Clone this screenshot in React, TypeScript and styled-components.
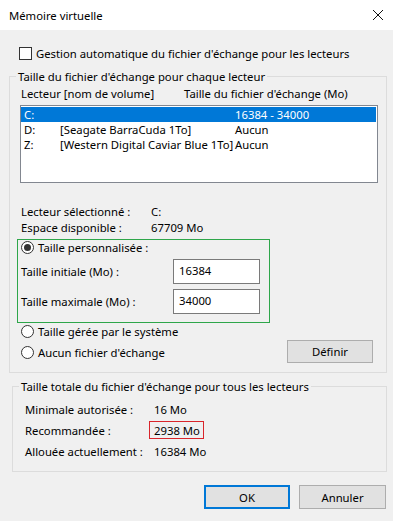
import React from 'react';
import styled, { createGlobalStyle } from 'styled-components';

const drives = [
  { letter: 'C:', name: '', size: '16384 - 34000', selected: true },
  { letter: 'D:', name: '[Seagate BarraCuda 1To]', size: 'Aucun', selected: false },
  { letter: 'Z:', name: '[Western Digital Caviar Blue 1To]', size: 'Aucun', selected: false },
];

const totals = [
  { label: 'Minimale autorisée :', value: '16 Mo', boxed: false },
  { label: 'Recommandée :', value: '2938 Mo', boxed: true },
  { label: 'Allouée actuellement :', value: '16384 Mo', boxed: false },
];

export default function App() {
  return (
    <>
      <GlobalStyle />
      <Window>
        <TitleBar>
          <span>Mémoire virtuelle</span>
          <CloseIcon width="12" height="12" viewBox="0 0 12 12">
            <path d="M1 1 L11 11 M11 1 L1 11" stroke="#111" strokeWidth="1" fill="none" />
          </CloseIcon>
        </TitleBar>

        <Body>
          <CheckRow>
            <CheckBox />
            <span>Gestion automatique du fichier d'échange pour les lecteurs</span>
          </CheckRow>

          <Group $left={9}>
            <Legend>Taille du fichier d'échange pour chaque lecteur</Legend>
            <ListHeader>
              <span>Lecteur [nom de volume]</span>
              <span>Taille du fichier d'échange (Mo)</span>
            </ListHeader>
            <ListBox>
              {drives.map((d) => (
                <DriveRow key={d.letter} $selected={d.selected}>
                  <span>{d.letter}</span>
                  <span>{d.name}</span>
                  <span>{d.size}</span>
                </DriveRow>
              ))}
            </ListBox>

            <InfoGrid>
              <span>Lecteur sélectionné :</span>
              <span>C:</span>
              <span>Espace disponible :</span>
              <span>67709 Mo</span>
            </InfoGrid>

            <CustomBox>
              <RadioRow>
                <Radio $checked />
                <span>Taille personnalisée :</span>
              </RadioRow>
              <FieldRow>
                <FieldLabel>Taille initiale (Mo) :</FieldLabel>
                <TextBox>16384</TextBox>
              </FieldRow>
              <FieldRow>
                <FieldLabel>Taille maximale (Mo) :</FieldLabel>
                <TextBox>34000</TextBox>
              </FieldRow>
            </CustomBox>

            <OptionsRow>
              <RadioColumn>
                <RadioRow>
                  <Radio />
                  <span>Taille gérée par le système</span>
                </RadioRow>
                <RadioRow>
                  <Radio />
                  <span>Aucun fichier d'échange</span>
                </RadioRow>
              </RadioColumn>
              <SetButton>Définir</SetButton>
            </OptionsRow>
          </Group>

          <Group $left={12} $top={6}>
            <Legend>Taille totale du fichier d'échange pour tous les lecteurs</Legend>
            <TotalsList>
              {totals.map((t) => (
                <TotalRow key={t.label} $boxed={t.boxed}>
                  <TotalLabel>{t.label}</TotalLabel>
                  <TotalValue $boxed={t.boxed}>{t.value}</TotalValue>
                </TotalRow>
              ))}
            </TotalsList>
          </Group>

          <Footer>
            <DialogButton $default>OK</DialogButton>
            <DialogButton>Annuler</DialogButton>
          </Footer>
        </Body>
      </Window>
    </>
  );
}

const GlobalStyle = createGlobalStyle`
  html, body {
    margin: 0;
    padding: 0;
    background: #f0f0f0;
  }
  body {
    font-family: "Segoe UI", "Noto Sans", "Liberation Sans", sans-serif;
    font-size: 11.3px;
    line-height: 15px;
    color: #000;
    white-space: nowrap;
  }
`;

const Window = styled.div`
  width: 393px;
  height: 521px;
  display: flex;
  flex-direction: column;
  background: #f0f0f0;
  overflow: hidden;
`;

const TitleBar = styled.div`
  height: 30px;
  flex-shrink: 0;
  background: #fff;
  display: flex;
  align-items: center;
  justify-content: space-between;
  padding: 0 9px 0 9px;
  box-sizing: border-box;
`;

const CloseIcon = styled.svg`
  margin-right: 0;
`;

const Body = styled.div`
  display: flex;
  flex-direction: column;
`;

const CheckRow = styled.div`
  display: flex;
  align-items: center;
  gap: 4px;
  height: 15px;
  margin: 16px 0 8px 19px;
`;

const CheckBox = styled.span`
  width: 13px;
  height: 13px;
  box-sizing: border-box;
  border: 1px solid #333;
  background: #fff;
`;

const Group = styled.fieldset<{ $left: number; $top?: number }>`
  margin: ${(p) => p.$top ?? 0}px 6px 0 ${(p) => p.$left}px;
  padding: 0;
  border: 1px solid #dcdcdc;
  min-width: 0;
`;

const Legend = styled.legend`
  margin-left: 6px;
  padding: 0 2px;
  line-height: 15px;
`;

const ListHeader = styled.div`
  display: grid;
  grid-template-columns: 163px 1fr;
  margin: 2px 0 0 11px;
  height: 15px;
`;

const ListBox = styled.div`
  margin: 4px 0 0 10px;
  width: 358px;
  height: 78px;
  box-sizing: border-box;
  border: 1px solid #828790;
  background: #fff;
  padding: 1px 1px 0 0;
`;

const DriveRow = styled.div<{ $selected: boolean }>`
  display: grid;
  grid-template-columns: 36px 175px 1fr;
  height: 15px;
  padding-left: 3px;
  background: ${(p) => (p.$selected ? '#0078d7' : 'transparent')};
  color: ${(p) => (p.$selected ? '#fff' : '#000')};
`;

const InfoGrid = styled.div`
  display: grid;
  grid-template-columns: 130px 1fr;
  grid-auto-rows: 16px;
  align-items: center;
  margin: 20px 0 0 11px;
`;

const CustomBox = styled.div`
  width: 253px;
  box-sizing: border-box;
  margin: 4px 0 0 7px;
  border: 1px solid #2ea64a;
  padding: 0 8px 8px 3px;
  display: flex;
  flex-direction: column;
  gap: 4px;
`;

const RadioRow = styled.div`
  display: flex;
  align-items: center;
  gap: 4px;
  height: 15px;
`;

const Radio = styled.span<{ $checked?: boolean }>`
  width: 13px;
  height: 13px;
  box-sizing: border-box;
  border-radius: 50%;
  border: 1px solid #333;
  background: #fff;
  display: flex;
  align-items: center;
  justify-content: center;

  &::after {
    content: '';
    width: 7px;
    height: 7px;
    border-radius: 50%;
    background: ${(p) => (p.$checked ? '#333' : 'transparent')};
  }
`;

const FieldRow = styled.div`
  display: flex;
  align-items: center;
  height: 25px;
  & + & {
    margin-top: 1px;
  }
`;

const FieldLabel = styled.span`
  width: 152px;
`;

const TextBox = styled.div`
  width: 87px;
  height: 25px;
  box-sizing: border-box;
  border: 1px solid #7a7a7a;
  background: #fff;
  padding: 3px 5px;
`;

const OptionsRow = styled.div`
  display: flex;
  justify-content: space-between;
  align-items: flex-start;
  margin: 1px 13px 9px 11px;
`;

const RadioColumn = styled.div`
  display: flex;
  flex-direction: column;
  gap: 6px;
`;

const SetButton = styled.button`
  margin-top: 16px;
  width: 86px;
  height: 23px;
  box-sizing: border-box;
  border: 1px solid #adadad;
  background: #e1e1e1;
  font: inherit;
  color: #000;
  padding: 0;
`;

const TotalsList = styled.div`
  display: flex;
  flex-direction: column;
  margin: 8px 0 12px 12px;
`;

const TotalRow = styled.div<{ $boxed: boolean }>`
  display: flex;
  align-items: center;
  height: ${(p) => (p.$boxed ? 18 : 15)}px;
  margin-top: ${(p) => (p.$boxed ? 4 : 5)}px;
  &:first-child {
    margin-top: 0;
  }
`;

const TotalLabel = styled.span`
  width: 124px;
`;

const TotalValue = styled.span<{ $boxed: boolean }>`
  height: 18px;
  box-sizing: border-box;
  display: flex;
  align-items: center;
  padding: 0 3px 0 4px;
  border: 1px solid ${(p) => (p.$boxed ? '#d9252b' : 'transparent')};
`;

const Footer = styled.div`
  display: flex;
  justify-content: flex-end;
  gap: 9px;
  margin: 13px 7px 0 0;
`;

const DialogButton = styled.button<{ $default?: boolean }>`
  width: ${(p) => (p.$default ? 86 : 87)}px;
  height: 24px;
  box-sizing: border-box;
  border: ${(p) => (p.$default ? '2px solid #0078d7' : '1px solid #adadad')};
  background: #e1e1e1;
  font: inherit;
  color: #000;
  padding: 0;
`;
